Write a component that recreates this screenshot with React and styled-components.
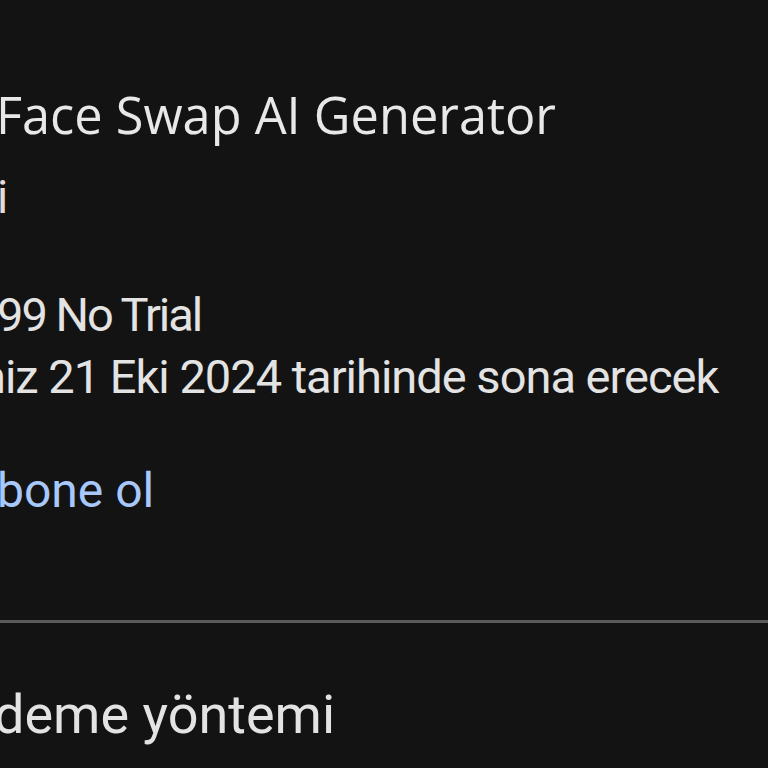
import React from "react";
import styled, { createGlobalStyle } from "styled-components";

const GlobalStyle = createGlobalStyle`
  html, body {
    margin: 0;
    padding: 0;
    background: #131313;
  }
  #root {
    min-height: 768px;
  }
`;

const Screen = styled.div`
  width: 768px;
  height: 768px;
  overflow: hidden;
  background: #131313;
  font-family: Roboto, "Noto Sans", sans-serif;
  display: flex;
  flex-direction: column;
`;

const Section = styled.div`
  display: flex;
  flex-direction: column;
  margin-top: ${(p) => p.$top || 0}px;
`;

const Title = styled.div`
  white-space: nowrap;
  color: #e8e8e8;
  font-family: "Open Sans", Roboto, sans-serif;
  font-size: 50.5px;
  line-height: 60px;
  margin-left: -4px;
`;

const Line = styled.div`
  white-space: nowrap;
  color: ${(p) => p.$color || "#e3e3e3"};
  font-size: ${(p) => p.$size || 47}px;
  line-height: ${(p) => p.$lh || 62}px;
  margin-left: ${(p) => p.$shift || 0}px;
  margin-top: ${(p) => p.$mt || 0}px;
  letter-spacing: ${(p) => p.$ls || 0}px;
`;

const Divider = styled.div`
  height: 3px;
  background: #5a5a5a;
  margin-top: ${(p) => p.$mt || 0}px;
`;

const App = () => {
  return (
    <>
      <GlobalStyle />
      <Screen>
        <Section $top={85}>
          <Title>Face Swap AI Generator</Title>
          <Line $size={46} $lh={60} $color="#eadad6" $shift={-3} $mt={22}>
            i
          </Line>
        </Section>
        <Section $top={57}>
          <Line $shift={-3} $ls={-2}>99 No Trial</Line>
          <Line $shift={-20} $ls={-1}>hiz 21 Eki 2024 tarihinde sona erecek</Line>
        </Section>
        <Section $top={53}>
          <Line $size={48} $lh={60} $color="#a8c7fa" $shift={-3}>
            bone ol
          </Line>
        </Section>
        <Divider $mt={99} />
        <Section $top={62}>
          <Line $size={54} $lh={60} $shift={-6}>deme yöntemi</Line>
        </Section>
      </Screen>
    </>
  );
};

export default App;
